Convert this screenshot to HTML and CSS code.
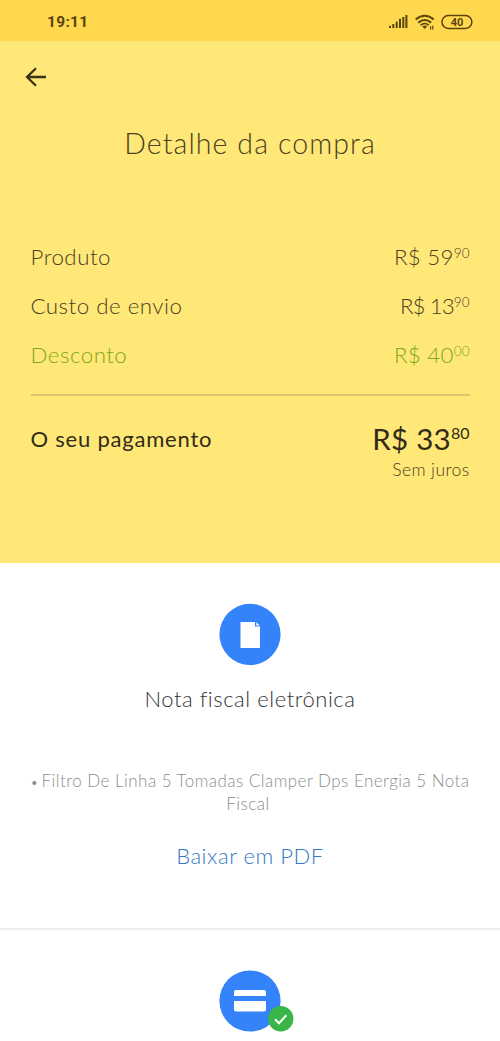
FILE: index.html
```html
<!DOCTYPE html>
<html lang="pt-BR">
<head>
<meta charset="utf-8">
<title>Detalhe da compra</title>
<link rel="stylesheet" href="styles.css">
</head>
<body>
<div class="status">
  <span class="time">19:11</span>
  <svg class="status-icons" width="88" height="20" viewBox="0 0 88 20">
    <g fill="#59430f">
      <rect x="2" y="14.8" width="2" height="2.2"/><rect x="5.3" y="13" width="2" height="4"/><rect x="8.7" y="10.6" width="2" height="6.4"/><rect x="12" y="7.8" width="2" height="9.2"/><rect x="15.3" y="6" width="2" height="11"/><rect x="18.4" y="4" width="2" height="13"/>
      <path d="M35.2 15.2 37.7 18 40.2 15.2Q37.7 13.6 35.2 15.2Z"/>
      <rect x="43" y="15.4" width="1.2" height="3"/><rect x="45.2" y="14.6" width="1.2" height="4"/>
    </g>
    <g fill="none" stroke="#59430f" stroke-width="2">
      <path d="M28.7 8.4Q37.7 1.2 46.7 8.4M31.3 11.6Q37.7 6.4 44.1 11.6"/><path d="M33.5 14.1Q37.7 10.7 41.9 14.1" stroke-width="1.5"/>
      <rect x="54.9" y="4.6" width="30" height="12.8" rx="6.4" stroke-width="1.5"/>
    </g>
    <text class="battery" x="70" y="15" text-anchor="middle">40</text>
  </svg>
</div>
<header class="summary">
  <svg class="back" width="24" height="24" viewBox="0 0 24 24"><path d="M22 12H3M12 3.2 3 12l9 8.8" fill="none" stroke="#3d3216" stroke-width="2.3"/></svg>
  <h1 class="title">Detalhe da compra</h1>
  <div class="row"><span>Produto</span><span class="price">R$ 59<sup>90</sup></span></div>
  <div class="row"><span>Custo de envio</span><span class="price price-narrow">R$ 13<sup>90</sup></span></div>
  <div class="row discount"><span>Desconto</span><span class="price">R$ 40<sup>00</sup></span></div>
  <div class="total"><span class="total-label">O seu pagamento</span><span class="price total-price">R$ 33<sup>80</sup></span></div>
  <p class="interest">Sem juros</p>
</header>
<section class="invoice">
  <svg class="circle" width="62" height="62" viewBox="0 0 62 62"><circle cx="31" cy="31.4" r="30.6" fill="#3483fa"/><path d="M21.5 19H36V23.5H41V45H21.5Z" fill="#fff"/><path d="M37.3 19.2V22.4H40.7Z" fill="#fff"/></svg>
  <h2 class="subtitle">Nota fiscal eletrônica</h2>
  <p class="item"><span class="bullet">•</span> Filtro De Linha 5 Tomadas Clamper Dps Energia 5 Nota<br><span class="item-end">Fiscal</span></p>
  <a class="download">Baixar em PDF</a>
</section>
<section class="payment">
  <svg class="card" width="76" height="64" viewBox="0 0 76 64"><circle cx="31" cy="31" r="30.6" fill="#3483fa"/><path d="M15 26V22Q15 20 17 20H45Q47 20 47 22V26ZM15 31H47V39.5Q47 41.5 45 41.5H17Q15 41.5 15 39.5Z" fill="#fff"/><circle cx="61.7" cy="48.8" r="12.7" fill="#39b54a"/><path d="m56 49.2 4 4 7.3-7.9" fill="none" stroke="#fff" stroke-width="2"/></svg>
</section>
</body>
</html>
```
FILE: styles.css
```css
* { box-sizing: border-box; }
body { margin: 0; height: 1041px; overflow: hidden; background: #fff; color: #333; font-family: Lato, sans-serif; font-weight: 300; }
h1, h2, p { margin: 0; font-weight: 300; }
.status { height: 41px; background: #ffd84d; display: flex; justify-content: space-between; padding: 11px 25px 0 47px; }
.time { font: 700 15.5px/23px Roboto, sans-serif; letter-spacing: .3px; color: #59430f; }
.status-icons { display: block; }
.battery { font: 700 11px Roboto, sans-serif; fill: #59430f; }
.summary { height: 522px; background: #ffe877; padding: 24px 30.5px 0; color: #4b401f; }
.back { display: block; margin-left: -7px; }
.title { margin-top: 34px; height: 40px; line-height: 41px; font-size: 28.5px; text-align: center; letter-spacing: 1.1px; margin-bottom: 69px; white-space: nowrap; }
.row { display: flex; justify-content: space-between; height: 49px; line-height: 49px; font-size: 22.3px; letter-spacing: .5px; }
.price { display: flex; letter-spacing: .3px; }
.price-narrow { letter-spacing: -.9px; }
.price sup { font-size: 13.5px; line-height: 42px; vertical-align: baseline; letter-spacing: 0; }
.discount { color: #7da818; }
.total { display: flex; justify-content: space-between; margin-top: 14.5px; border-top: 2px solid #dbc66b; height: 65px; padding-top: 21px; line-height: 44px; color: #322b17; }
.total-label { font-size: 22px; font-weight: 400; letter-spacing: .78px; }
.total-price { font-size: 29.5px; line-height: 43px; font-weight: 400; letter-spacing: .25px; }
.total-price sup { font-size: 16px; line-height: 32px; }
.interest { text-align: right; font-size: 17.5px; line-height: 22px; letter-spacing: .4px; margin-top: .7px; }
.invoice { height: 367px; border-bottom: 2px solid #eee; padding-top: 40px; text-align: center; }
.circle { display: block; margin: 0 auto; }
.subtitle { margin-top: 18px; font-size: 22px; line-height: 32px; letter-spacing: .55px; }
.item { margin-top: 54px; font-size: 17px; line-height: 23px; color: #8d8d8d; white-space: nowrap; letter-spacing: .46px; }
.bullet { font-size: 13px; line-height: 1; margin-right: -2px; }
.item-end { padding-right: 4px; }
.download { display: block; margin-top: 24px; font-size: 22px; line-height: 34px; color: #3478c6; letter-spacing: .55px; }
.payment { height: 111px; padding: 40px 0 0 219px; }
.card { display: block; }
```
